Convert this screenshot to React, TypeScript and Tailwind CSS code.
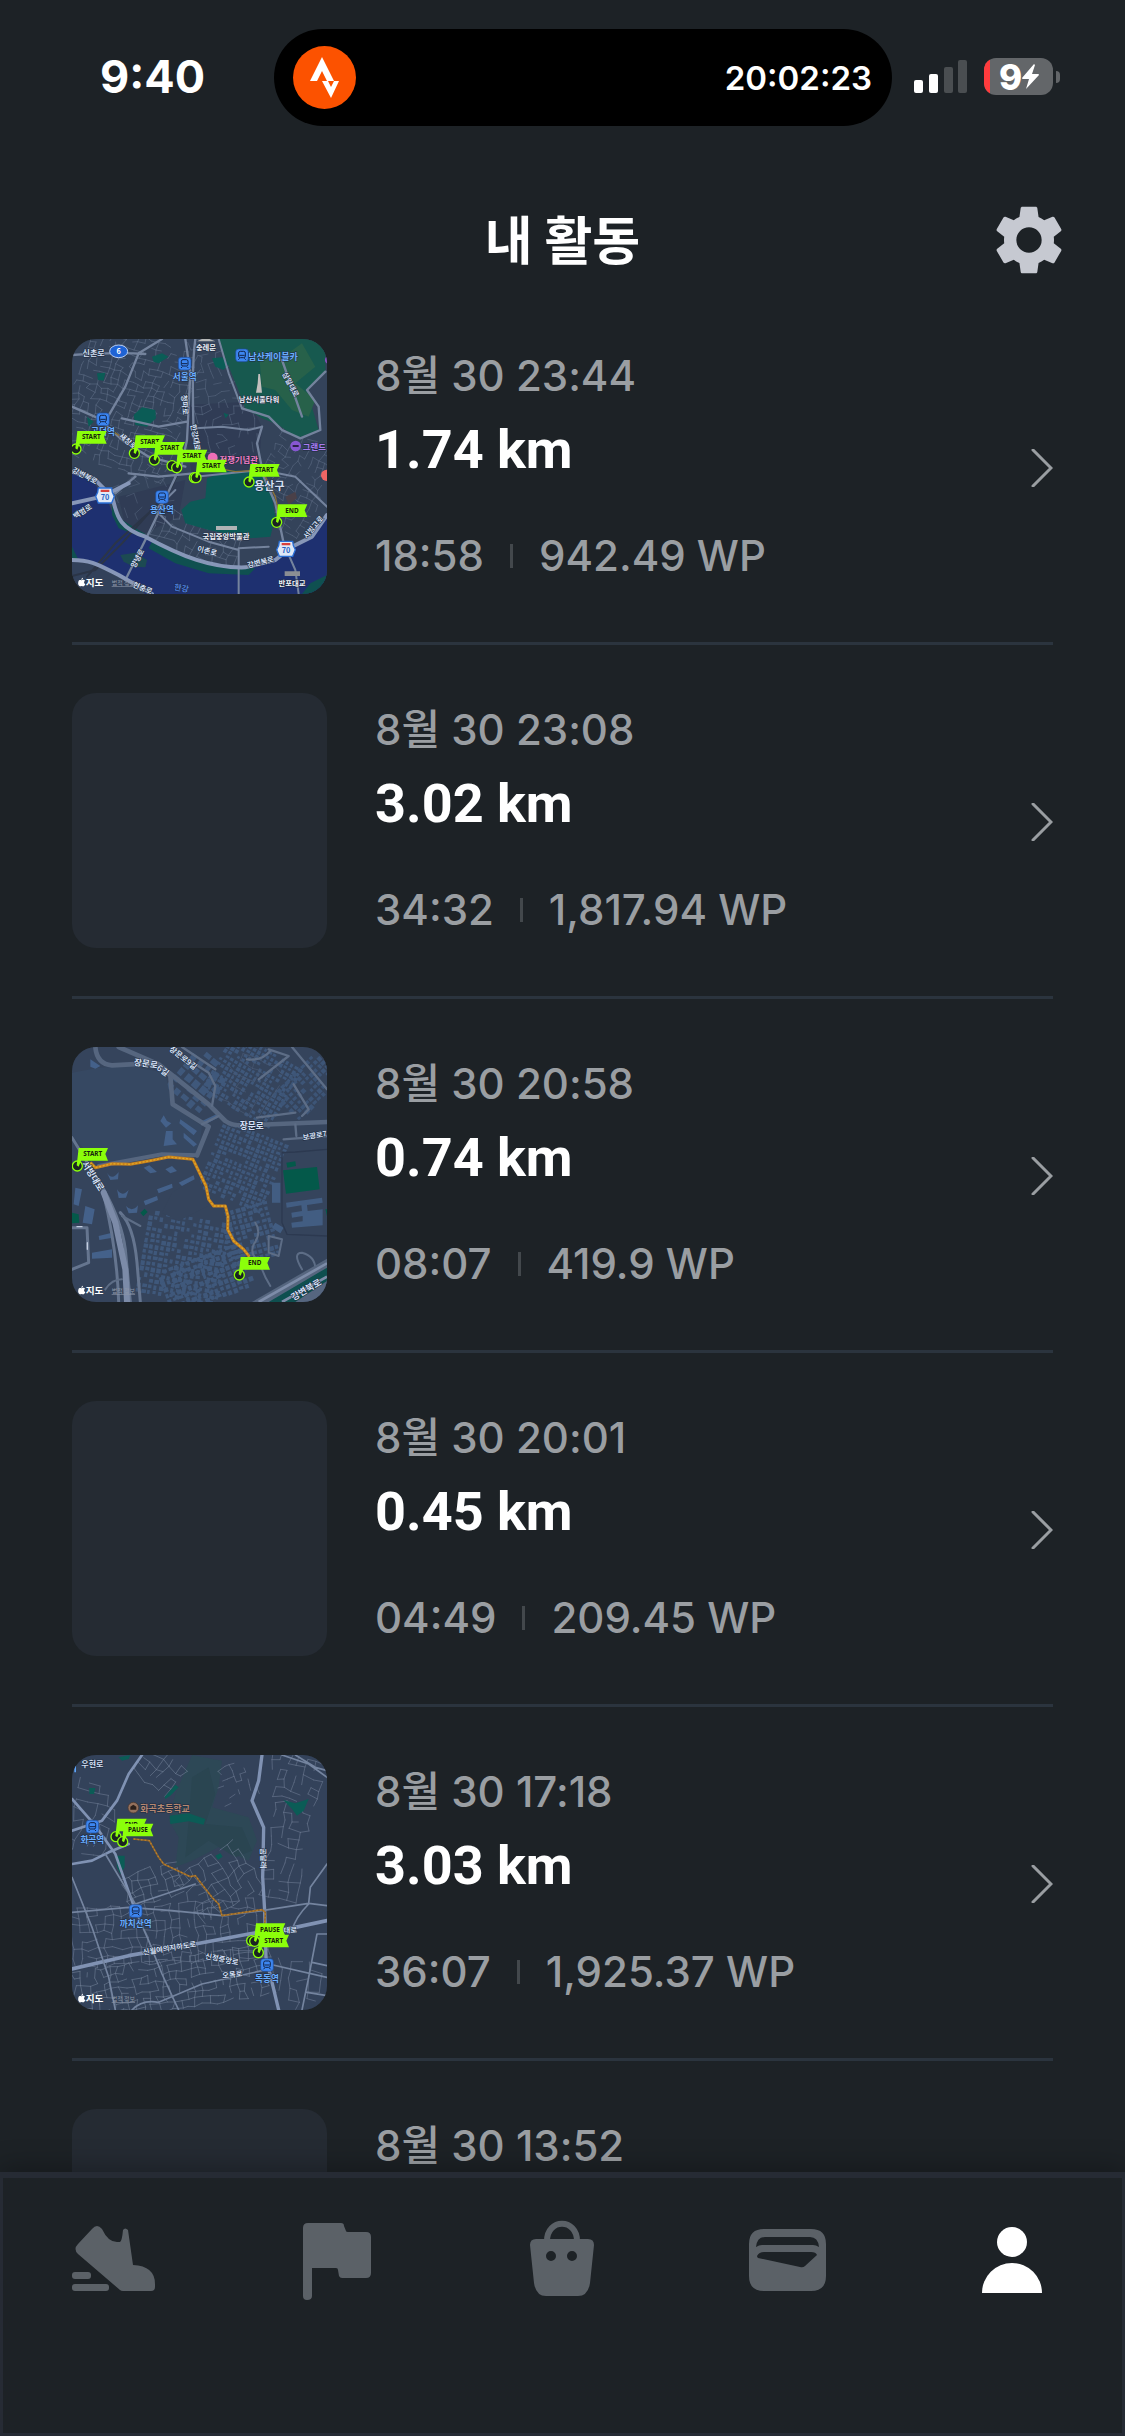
import type { ReactNode } from 'react';

interface Activity {
  id: number;
  date: string;
  distance: string;
  duration: string;
  points: string;
  map?: ReactNode;
}

/* ---------- map helpers ---------- */

type Area = [number, number, number, number];

function createRandom(seed: number) {
  let s = seed;
  return () => {
    s = (s * 16807) % 2147483647;
    return s / 2147483647;
  };
}

// Irregular street grid inside an area, rotated around its centre
function streets(seed: number, [x0, y0, x1, y1]: Area, step: number, angle: number, keep: number) {
  const rand = createRandom(seed);
  const cx = (x0 + x1) / 2;
  const cy = (y0 + y1) / 2;
  const cos = Math.cos((angle * Math.PI) / 180);
  const sin = Math.sin((angle * Math.PI) / 180);
  const cols = Math.floor((x1 - x0) / step);
  const rows = Math.floor((y1 - y0) / step);
  const nodes: string[][] = [];
  for (let r = 0; r <= rows; r++) {
    nodes.push([]);
    for (let c = 0; c <= cols; c++) {
      const dx = x0 + c * step + (rand() - 0.5) * step * 0.5 - cx;
      const dy = y0 + r * step + (rand() - 0.5) * step * 0.5 - cy;
      nodes[r].push(`${Math.round(cx + dx * cos - dy * sin)} ${Math.round(cy + dx * sin + dy * cos)}`);
    }
  }
  let d = '';
  for (let r = 0; r <= rows; r++) {
    for (let c = 0; c <= cols; c++) {
      if (c < cols && rand() < keep) d += `M${nodes[r][c]}L${nodes[r][c + 1]}`;
      if (r < rows && rand() < keep) d += `M${nodes[r][c]}L${nodes[r + 1][c]}`;
    }
  }
  return d;
}

// Small building footprints packed inside an area
function buildings(seed: number, [x0, y0, x1, y1]: Area, step: number, angle: number) {
  const rand = createRandom(seed);
  const cos = Math.cos((angle * Math.PI) / 180);
  const sin = Math.sin((angle * Math.PI) / 180);
  const cx = (x0 + x1) / 2;
  const cy = (y0 + y1) / 2;
  let d = '';
  for (let y = y0; y < y1; y += step) {
    for (let x = x0; x < x1; x += step) {
      if (rand() < 0.12) continue;
      const w = step * (0.5 + rand() * 0.35);
      const h = step * (0.5 + rand() * 0.35);
      const corners = [[x, y], [x + w, y], [x + w, y + h], [x, y + h]].map(([px, py]) => {
        const dx = px - cx;
        const dy = py - cy;
        return `${Math.round(cx + dx * cos - dy * sin)} ${Math.round(cy + dx * sin + dy * cos)}`;
      });
      d += `M${corners.join('L')}Z`;
    }
  }
  return d;
}

function Road({ d, w = 4, color = '#6f7f9b' }: { d: string; w?: number; color?: string }) {
  return <path d={d} fill="none" stroke={color} strokeWidth={w} strokeLinejoin="round" strokeLinecap="round" />;
}

interface LabelProps {
  x: number;
  y: number;
  children: string;
  fill?: string;
  size?: number;
  rotate?: number;
}

function Label({ x, y, children, fill = '#d5e0f5', size = 22, rotate = 0 }: LabelProps) {
  return (
    <text
      x={x}
      y={y}
      fill={fill}
      fontSize={size}
      textAnchor="middle"
      dominantBaseline="central"
      transform={`rotate(${rotate} ${x} ${y})`}
      stroke="#1e2a3f"
      strokeWidth={3}
      paintOrder="stroke"
      className="font-bold"
    >
      {children}
    </text>
  );
}

function Pin({ x, y, label }: { x: number; y: number; label?: string }) {
  return (
    <g transform={`translate(${x} ${y})`}>
      <circle r={15} fill="#1b2422" stroke="#8bff0a" strokeWidth={4} />
      {label && (
        <>
          <path d="M4-54H92L84-36 92-16H11L4 2-2-2Z" fill="#8bff0a" />
          <text x={46} y={-29} fontSize={19} textAnchor="middle" fill="#16240c" className="font-['Noto_Sans'] font-bold">
            {label}
          </text>
        </>
      )}
    </g>
  );
}

function Station({ x, y, name, labelY = 37 }: { x: number; y: number; name?: string; labelY?: number }) {
  return (
    <g>
      <rect x={x - 19} y={y - 19} width={38} height={38} rx={9} fill="#3d86f0" stroke="#1d4a97" strokeWidth={2} />
      <rect x={x - 10} y={y - 12} width={20} height={19} rx={5} fill="none" stroke="#10234a" strokeWidth={3} />
      <path d={`M${x - 8} ${y}h16M${x - 7} ${y + 9}l-4 4M${x + 7} ${y + 9}l4 4`} stroke="#10234a" strokeWidth={3} />
      {name && <Label x={x} y={y + labelY} fill="#6aaeff" size={26}>{name}</Label>}
    </g>
  );
}

function Route70({ x, y }: { x: number; y: number }) {
  return (
    <g transform={`translate(${x} ${y})`}>
      <path d="M-20-23H20L22-10 28 2 20 22H-20L-28 2-22-10Z" fill="#dfe8f7" stroke="#2a6fd6" strokeWidth={4} />
      <path d="M-13-18H13V-11H-13Z" fill="#d8403c" />
      <text y={12} fontSize={22} textAnchor="middle" fill="#2461c4" className="font-bold">70</text>
    </g>
  );
}

function MapCredit({ y }: { y: number }) {
  return (
    <g>
      <path
        transform={`translate(48 ${y - 14})`}
        d="M15 0C15 4 12 6 10 6 10 3 12 1 15 0ZM10 8C12 8 13 6 16 6 18 6 20 7 21 9 17 12 17 17 22 19 20 23 18 26 16 26 14 26 13 25 11 25 9 25 8 26 6 26 2 25-1 18 1 12 3 6 7 7 10 8Z"
        fill="#fff"
      />
      <text x={71} y={y + 10} fontSize={29} fill="#fff" className="font-bold">지도</text>
      <text x={149} y={y + 9} fontSize={18} fill="#8d97a8" textDecoration="underline">법적 정보</text>
    </g>
  );
}

function MapFrame({ top, title, children }: { top: number; title: string; children: ReactNode }) {
  return (
    <svg
      viewBox={`30 ${top} 765 765`}
      role="img"
      aria-label={title}
      className="size-full font-['Noto_Sans_CJK_KR',sans-serif]"
    >
      {children}
    </svg>
  );
}

function YongsanMap() {
  return (
    <MapFrame top={27} title="용산구">
      <rect x={30} y={27} width={765} height={765} fill="#34435a" />
      <path d="M370 225L560 215 600 290 590 420 390 440 375 330ZM170 500L370 450 350 560 250 610 190 590Z" fill="#303c55" />
      <Road d={streets(11, [30, 20, 380, 420], 20, 18, 0.55)} w={2} color="#5b6a82" />
      <Road d={streets(23, [390, 20, 560, 380], 24, -12, 0.45)} w={2} color="#55647c" />
      <Road d={streets(31, [590, 320, 800, 600], 20, 30, 0.55)} w={2} color="#56657d" />
      <Road d={streets(47, [270, 570, 540, 690], 22, 20, 0.65)} w={2} color="#5b6a82" />
      <Road d={streets(53, [150, 430, 340, 560], 24, -30, 0.35)} w={2} color="#4f5e76" />
      <path d="M470 27H790V130L735 180 770 300 705 325 650 285 600 265 550 235 525 170 490 85Z" fill="#17594f" />
      <path d="M590 60L650 90 720 40 760 110 700 160 760 210 740 260 690 240 640 180 600 170Z" fill="#27614a" />
      <path d="M450 85L480 82 500 100 485 120 460 110ZM215 255L240 232 280 240 282 265 255 290 220 285ZM255 340L285 335 310 350 280 372ZM105 130L130 128 125 152 108 150ZM270 80L300 70 320 80 290 100 275 95ZM75 260L95 275 80 290ZM485 248L500 254 490 265Z" fill="#0b5c56" />
      <path d="M435 445L500 420 590 425 625 470 640 560 625 620 560 625 440 600 370 580 358 540 385 515 430 505Z" fill="#0c5a57" />
      <path d="M670 500L700 485 705 505 680 525Z" fill="#4a4048" />
      <path d="M30 430L90 450 140 520 160 570 240 615 330 660 430 700 530 712 600 700 680 660 750 620 795 560V792H250L200 750 90 695 30 680Z" fill="#1e3070" />
      <path d="M30 650L50 690 30 690ZM150 500L165 560 250 612 240 622 170 595 150 555ZM270 635L400 690 500 712 580 715 560 735 440 730 340 700 260 655ZM745 760L795 735V792H720Z" fill="#0f5050" />
      <path d="M175 675L220 668 255 690 250 712 215 710 185 695Z" fill="#1c4a52" />
      <path d="M30 695L90 705 180 750 240 792H30Z" fill="#32415a" />
      <Road d="M30 738L100 720 180 640 260 550 330 470 370 380M75 740L160 640 270 540" w={6} color="#2b3547" />
      <Road d="M30 75C100 70 180 66 250 72M300 27L230 70 190 170 135 265M370 27L385 130 375 330 360 400 260 610 190 750M400 27C390 100 392 200 395 320L410 400M30 230L110 265 180 330 260 380 370 410M180 265L290 290 375 275M600 290L585 340 605 440 640 520 665 640M540 235L620 260 660 300 715 325 775 300 770 230 735 180 790 125M660 90L720 260M200 430L290 440 395 430M160 490L220 440" w={7} color="#74839d" />
      <Road d="M470 27L500 130 540 235M600 290L560 300 480 290 400 295M400 440L600 420 700 440 795 530M340 480L280 540 330 590 440 635 530 660 530 792M665 640L700 720 710 792M530 655L620 650" w={6} color="#74839d" />
      <Road d="M30 520L120 500 200 460M30 690C90 690 110 705 170 735L270 792M795 555L750 620 690 650 640 690 550 712C450 715 360 680 250 620 160 590 165 545 150 500L95 445 30 425" w={12} color="#8797b8" />
      <Road d="M440 410L520 425 600 420 640 500 650 545M130 290L185 325" w={4} color="#8a7138" />
      <Label x={95} y={68} size={24}>신촌로</Label>
      <ellipse cx={170} cy={64} rx={27} ry={19} fill="#1f63d4" stroke="#b7cdf2" strokeWidth={3} />
      <text x={170} y={72} fontSize={22} textAnchor="middle" fill="#fff" className="font-bold">6</text>
      <path d="M405 34L430 22 460 34Z" fill="#b5b7b6" />
      <Label x={432} y={50} size={22} fill="#f0f3fa">숭례문</Label>
      <Station x={368} y={101} name="서울역" />
      <Station x={540} y={76} />
      <Label x={633} y={78} size={27} fill="#6aaeff">남산케이블카</Label>
      <path d="M589 132H594L597 160 600 188H582L587 160Z" fill="#c3bfbd" />
      <Label x={591} y={204} size={22} fill="#f0f3fa">남산서울타워</Label>
      <Label x={688} y={162} rotate={62}>삼일대로</Label>
      <Label x={371} y={224} rotate={85}>청파로</Label>
      <Label x={403} y={322} rotate={80}>한강대로</Label>
      <Station x={123} y={268} name="공덕역" labelY={36} />
      <Label x={200} y={332} rotate={40}>새창로</Label>
      <circle cx={701} cy={348} r={16} fill="#8757d2" />
      <path d="M692 348H710" stroke="#2c2148" strokeWidth={6} />
      <Label x={757} y={349} size={25} fill="#a77cf0">그랜드</Label>
      <circle cx={452} cy={383} r={15} fill="#ee6fb8" />
      <Label x={530} y={386} size={25} fill="#f47fc6">전쟁기념관</Label>
      <circle cx={794} cy={436} r={17} fill="#ee6565" />
      <circle cx={800} cy={90} r={11} fill="#9054c8" />
      <Label x={70} y={435} rotate={28}>강변북로</Label>
      <Label x={60} y={542} rotate={-32}>백범로</Label>
      <Route70 x={129} y={497} />
      <Route70 x={672} y={657} />
      <Station x={300} y={501} name="용산역" />
      <path d="M462 588H525V600H462Z" fill="#b0b3b5" />
      <Label x={492} y={616} size={22} fill="#f0f3fa">국립중앙박물관</Label>
      <Label x={436} y={660} rotate={14}>이촌로</Label>
      <Label x={224} y={684} rotate={-62}>양녕로</Label>
      <Label x={595} y={694} rotate={-14}>강변북로</Label>
      <Label x={752} y={590} rotate={-50}>서빙고로</Label>
      <Label x={622} y={465} size={33}>용산구</Label>
      <Label x={359} y={773} size={24} rotate={10} fill="#4b7ee0">한강</Label>
      <path d="M668 724H714V738H668Z" fill="#8b8e93" />
      <Label x={690} y={757} size={22} fill="#f0f3fa">반포대교</Label>
      <Label x={243} y={772} rotate={22}>현충로</Label>
      <Pin x={42} y={357} label="START" />
      <Pin x={217} y={370} label="START" />
      <Pin x={277} y={390} label="START" />
      <Pin x={330} y={407} />
      <Pin x={344} y={413} label="START" />
      <Pin x={397} y={443} />
      <Pin x={402} y={443} label="START" />
      <Pin x={561} y={456} label="START" />
      <Pin x={644} y={577} label="END" />
      <MapCredit y={757} />
    </MapFrame>
  );
}

function JangmunMap() {
  return (
    <MapFrame top={33} title="장문로">
      <rect x={30} y={33} width={765} height={765} fill="#35445c" />
      <path d={buildings(5, [450, 30, 690, 240], 15, 30)} fill="#3f587b" />
      <path d={buildings(9, [350, 50, 470, 200], 28, 40)} fill="#3f587b" />
      <path d={buildings(13, [440, 280, 640, 500], 15, 22)} fill="#3f587b" />
      <path d={buildings(17, [240, 540, 480, 790], 17, 10)} fill="#3f587b" />
      <path d={buildings(19, [490, 510, 640, 680], 17, -15)} fill="#3f587b" />
      <path d={buildings(21, [680, 60, 790, 240], 17, 45)} fill="#3d5577" />
      <path d={buildings(27, [300, 660, 560, 800], 18, -20)} fill="#3f587b" />
      <path d="M30 110L110 95 200 90 310 110 330 210 420 270 410 350 280 360 110 385 30 300Z" fill="#364862" />
      <path d="M300 530L330 470 410 420 440 510 350 555Z" fill="#35445c" />
      <path d="M295 255L305 238 315 255 328 262 312 275ZM312 285H332V310L345 325 305 330ZM355 250L405 285 395 298 352 262ZM365 290L405 325 395 332 365 305ZM420 255L470 232 468 245 430 265ZM135 410Q150 435 170 408L168 430 145 432ZM165 460Q180 485 200 462L192 485 170 486ZM192 510Q210 530 228 508L225 530 200 532ZM245 395L262 388 285 408 265 412ZM310 400L330 390 345 405 325 412ZM350 440L395 418 398 430 360 450ZM285 460L330 443 332 455 290 472ZM245 495L285 480 288 492 250 508ZM85 70L115 90 100 98 85 92ZM40 455L60 460 50 510 35 505ZM70 510L98 520 90 565 62 560ZM90 650L150 640 150 665 90 668ZM110 600L150 590 152 605 112 612Z" fill="#44618a" />
      <path d="M672 500L780 485 782 500 735 507 737 525 782 520V568L690 575 688 560 722 556V540L690 545 688 530 720 525 718 508 674 515ZM630 440H655V500H630ZM640 560L665 575 655 592 630 575Z" fill="#425d82" />
      <path d="M660 350L700 348 795 340M660 350V560L675 595 795 600" fill="none" stroke="#2c3950" strokeWidth={4} />
      <path d="M663 403L765 393 773 460 672 473ZM673 380L700 376 702 390 676 395ZM235 530L248 518 257 528 244 541ZM30 530L50 535 52 560 30 562ZM790 520H795V540Z" fill="#04594a" />
      <Road d={streets(61, [470, 70, 660, 240], 32, 30, 0.5)} w={2} color="#4a5b76" />
      <Road d="M100 33Q105 85 150 88L260 82Q310 90 325 120L332 205 440 272 405 358" w={14} color="#56667f" />
      <Road d="M170 33L290 85 440 205 490 255Q510 270 550 268L795 258" w={14} color="#56667f" />
      <Road d="M330 40L440 110 460 150 450 210M360 33L460 100M690 33L795 160M590 130L680 60 620 40M555 70Q600 75 625 45M695 145L740 220 720 240M585 245L700 230M420 265L470 240M665 310L795 300M700 265L703 300" w={7} color="#5d6d86" />
      <Road d="M110 390L300 355 405 358" w={12} color="#56667f" />
      <Road d="M30 305L125 460Q180 560 190 640L205 798M125 475Q165 640 170 798M175 530Q215 570 225 680L235 798M30 575L75 575 80 680 30 700" w={9} color="#65758f" />
      <Road d="M125 470L160 560 190 700 195 798" w={18} color="#7c8ba8" />
      <Road d="M580 560Q600 590 575 625 560 660 600 680M620 600L660 610 650 660 620 650ZM595 680Q600 710 625 750M720 700Q690 650 720 650 760 660 760 700M130 760Q150 730 180 730M180 540L235 570" w={6} color="#5d6d86" />
      <path d="M570 798L795 668V798Z" fill="#56667f" />
      <path d="M620 798L795 695V735L700 798Z" fill="#0e4f4f" />
      <path d="M590 798L795 682M660 798L795 722" stroke="#7d8ca8" strokeWidth={8} />
      <path
        d="M85 380L100 395 150 383 205 385 260 375 320 363 393 370 410 405 432 450 440 490 455 510 490 510 498 540 497 580 515 615 545 640 562 662"
        fill="none"
        stroke="#c9801c"
        strokeWidth={9}
        strokeLinejoin="round"
      />
      <path
        d="M85 380L100 395 150 383 205 385 260 375 320 363 393 370 410 405 432 450 440 490 455 510 490 510 498 540 497 580 515 615 545 640 562 662"
        fill="none"
        stroke="#deaa28"
        strokeWidth={4}
        strokeDasharray="6 5"
      />
      <Road d="M45 572H60M76 620V640" w={4} color="#c2cde0" />
      <Label x={252} y={80} rotate={8} size={26}>장문로</Label>
      <Label x={304} y={101} rotate={35} size={25}>6길</Label>
      <Label x={365} y={64} rotate={38} size={23}>장문로9길</Label>
      <Label x={569} y={266} size={26}>장문로</Label>
      <Label x={758} y={296} size={22} rotate={-10}>보광로7</Label>
      <Label x={94} y={420} size={27} rotate={58}>서빙대로</Label>
      <Label x={732} y={760} size={27} rotate={-30}>강변북로</Label>
      <Pin x={46} y={390} label="START" />
      <Pin x={532} y={717} label="END" />
      <MapCredit y={763} />
    </MapFrame>
  );
}

function HwagokMap() {
  return (
    <MapFrame top={33} title="화곡역">
      <rect x={30} y={33} width={765} height={765} fill="#33425a" />
      <path d="M390 33L480 50 470 130 450 190 560 220 585 290 560 350 470 310 390 350 340 370 350 280 320 230 340 150Z" fill="#2d4856" />
      <path d="M390 100L440 70 460 150 430 240 540 250 570 320 520 340 440 290 370 340 380 230Z" fill="#2a4551" />
      <Road d={streets(7, [220, 30, 370, 150], 26, 40, 0.65)} w={2} color="#6a7890" />
      <Road d={streets(8, [30, 120, 150, 340], 30, 15, 0.5)} w={2} color="#66748c" />
      <Road d={streets(14, [370, 330, 590, 500], 26, -33, 0.75)} w={2} color="#6a7890" />
      <Road d={streets(15, [190, 370, 380, 480], 24, -18, 0.65)} w={2} color="#6a7890" />
      <Road d={streets(16, [30, 480, 600, 660], 25, -3, 0.68)} w={2} color="#66748c" />
      <Road d={streets(18, [40, 640, 640, 800], 22, -9, 0.7)} w={2} color="#6a7890" />
      <Road d={streets(22, [620, 180, 740, 480], 26, 10, 0.55)} w={2} color="#66748c" />
      <Road d={streets(24, [620, 40, 790, 170], 26, 15, 0.5)} w={2} color="#66748c" />
      <Road d={streets(26, [650, 650, 790, 800], 30, 5, 0.5)} w={2} color="#66748c" />
      <Road d={streets(28, [470, 60, 590, 180], 18, -20, 0.4)} w={2} color="#66748c" />
      <path d="M308 158L340 122 350 130 325 155 310 165ZM323 215L380 208 430 225 425 242 380 232 325 240ZM664 168L700 178 740 165 725 200 705 215 690 195ZM460 335L475 328 482 338 468 347ZM163 335H188V370L175 390 165 370ZM82 132H100L96 150H82ZM170 40L205 33 200 45 180 50Z" fill="#0b5c56" />
      <Road d="M240 33L200 90 165 170 120 230 30 260M30 165L100 245 160 330 220 500M30 360L90 350 140 325 200 300" w={8} color="#8092b3" />
      <Road d="M600 33L590 110 570 170 605 250 602 400 608 500 612 640 650 798" w={10} color="#8092b3" />
      <Road d="M30 675L200 635 400 600 560 570 700 550 795 530" w={11} color="#8092b3" />
      <Road d="M220 500L260 590 300 690 350 798M30 505L200 490 330 500 480 515 600 500 740 478 795 485M740 478L745 430 795 360M130 330L220 480 400 420M690 560Q700 520 740 480" w={5} color="#74849f" />
      <Road d="M30 400L90 550 140 700 160 798M620 660L795 700M765 570L740 700 720 798M765 570H795M750 655L795 665M735 745L795 755M210 798Q240 765 290 775L420 720 600 680M700 33L760 70 795 80M660 33L740 60 795 100" w={5} color="#74849f" />
      <Road d="M215 285L262 290 290 340 305 360 385 398 400 395 450 460 470 480 480 515 600 497 610 505 608 545" w={5} color="#8f6429" />
      <path
        d="M215 285L262 290 290 340 305 360 385 398 400 395 450 460 470 480 480 515 600 497 610 505 608 545"
        fill="none"
        stroke="#b9802f"
        strokeWidth={4}
        strokeDasharray="5 6"
      />
      <Label x={91} y={58} size={24}>우현로</Label>
      <path d="M37 65H42V85H37Z" fill="#5da4f8" />
      <circle cx={214} cy={191} r={16} fill="#94705c" stroke="#49352b" strokeWidth={2} />
      <path d="M205 197V188L214 182 223 188V197Z" fill="#2b1f1a" />
      <Label x={309} y={192} size={27} fill="#b58872">화곡초등학교</Label>
      <Station x={91} y={248} name="화곡역" labelY={38} />
      <Station x={221} y={501} name="까치산역" labelY={37} />
      <Station x={615} y={663} name="목동역" labelY={38} />
      <Label x={606} y={343} size={22} rotate={88}>곰달래</Label>
      <Label x={322} y={610} size={22} rotate={-9}>신월여의지하도로</Label>
      <Label x={480} y={643} size={22} rotate={11}>신정중앙로</Label>
      <Label x={511} y={689} size={22} rotate={-6}>오목로</Label>
      <Label x={685} y={556} size={22} rotate={-4}>대로</Label>
      <Pin x={162} y={278} label="END" />
      <Pin x={182} y={293} label="PAUSE" />
      <Pin x={569} y={590} />
      <Pin x={578} y={592} label="PAUSE" />
      <Pin x={589} y={626} label="START" />
      <MapCredit y={763} />
    </MapFrame>
  );
}

/* ---------- data ---------- */

const activities: Activity[] = [
  { id: 1, date: '8월 30 23:44', distance: '1.74 km', duration: '18:58', points: '942.49 WP', map: <YongsanMap /> },
  { id: 2, date: '8월 30 23:08', distance: '3.02 km', duration: '34:32', points: '1,817.94 WP' },
  { id: 3, date: '8월 30 20:58', distance: '0.74 km', duration: '08:07', points: '419.9 WP', map: <JangmunMap /> },
  { id: 4, date: '8월 30 20:01', distance: '0.45 km', duration: '04:49', points: '209.45 WP' },
  { id: 5, date: '8월 30 17:18', distance: '3.03 km', duration: '36:07', points: '1,925.37 WP', map: <HwagokMap /> },
  { id: 6, date: '8월 30 13:52', distance: '', duration: '', points: '' },
];

const tabs = [
  {
    label: '운동',
    icon: (
      <>
        <path d="M24 12Q29 6 34 12 40 25 49 25H52Q54 24 55 13 57 10 60 13L65 48Q87 49 87 67V70Q87 74 83 74H55Q53 74 52 73L10 37Q5 32 10 27Z" />
        <rect x={4} y={55} width={19} height={7} rx={3} />
        <rect x={4} y={67} width={37} height={7} rx={3} />
      </>
    ),
  },
  {
    label: '챌린지',
    icon: <path d="M10 11Q10 6 15 6H48Q51 6 51 9L53 14Q53 15 55 15H73Q78 15 78 20V56Q78 61 73 61H49Q47 61 46 59L45 53Q45 51 43 51H19V79Q19 83 14 83 10 83 10 79Z" />,
  },
  {
    label: '상점',
    icon: (
      <>
        <path d="M29 24C29 1 59 1 59 24" fill="none" stroke="currentColor" strokeWidth={6} />
        <path
          fillRule="evenodd"
          d="M18 22H70Q76 22 76 28L72 66Q70 79 60 79H28Q18 79 16 66L12 28Q12 22 18 22ZM33 34a5 5 0 1 0 0 10a5 5 0 1 0 0-10ZM54 34a5 5 0 1 0 0 10a5 5 0 1 0 0-10Z"
        />
      </>
    ),
  },
  {
    label: '지갑',
    icon: (
      <path
        fillRule="evenodd"
        d="M21 12H68Q83 12 83 27V59Q83 74 68 74H21Q6 74 6 59V27Q6 12 21 12ZM13 30Q14 20 22 20H67Q75 20 76 30 73 28 70 28H19Q16 28 13 30ZM14 39Q16 35 21 35H68Q73 35 74 38L62 49Q60 51 57 50L15 41Q14 40 14 39Z"
      />
    ),
  },
  {
    label: '내 활동',
    active: true,
    icon: (
      <>
        <circle cx={44} cy={25} r={15} />
        <path d="M14 76A30 30 0 0 1 74 76Z" />
      </>
    ),
  },
];

/* ---------- screen ---------- */

function StatusBar() {
  return (
    <div className="flex items-center pt-[29px]">
      <div className="w-[274px] pb-0.5 pl-[100px] text-[45px] leading-[48px] font-bold">9:40</div>
      <div className="flex h-[97px] flex-1 items-center justify-between rounded-full bg-black pr-5 pl-[19px]">
        <svg viewBox="0 0 63 63" className="size-[63px]" aria-label="Strava">
          <circle cx={31.5} cy={31.5} r={31.5} fill="#fc5200" />
          <path d="M29 11L41 35H34L29 25 24 35H17Z" fill="#fff" />
          <path fillRule="evenodd" d="M29 35H46L38 52ZM35 35L38 41 41 35Z" fill="#fff" />
        </svg>
        <span className="text-[33px] leading-[48px] font-semibold">20:02:23</span>
      </div>
      <div className="flex w-[233px] items-center gap-4 pb-0.5 pl-[22px]">
        <svg viewBox="0 0 54 34" className="h-[34px] w-[54px]" aria-label="신호">
          <rect x={0} y={20} width={9} height={13} rx={2} fill="#fff" />
          <rect x={15} y={14} width={9} height={19} rx={2} fill="#fff" />
          <rect x={30} y={7} width={9} height={26} rx={2} fill="#4a4e51" />
          <rect x={44} y={0} width={9} height={33} rx={2} fill="#4a4e51" />
        </svg>
        <div className="flex items-center gap-[3px]">
          <div className="flex h-[37px] w-[69px] items-center overflow-hidden rounded-xl bg-[#636669]">
            <span className="h-full w-[6px] bg-[#ff3b3d]" />
            <span className="ml-[9px] text-[35px] leading-[48px] font-extrabold">9</span>
            <svg viewBox="0 0 17 25" className="h-[25px] w-[17px]" fill="#fff">
              <path d="M12 0L0 14Q0 15 1 15H7L4 25 17 11Q17 10 16 10H10L13 1Z" />
            </svg>
          </div>
          <span className="h-3 w-1 rounded-r-full bg-[#636669]" />
        </div>
      </div>
    </div>
  );
}

function ActivityRow({ activity }: { activity: Activity }) {
  return (
    <li className="border-b-[3px] border-[#2b343e] pb-12">
      <a href={`#activity-${activity.id}`} className="flex items-center gap-12">
        <div className="size-[255px] shrink-0 overflow-hidden rounded-3xl bg-[#252b33]">{activity.map}</div>
        <div className="flex-1 self-start pt-[13px] text-[42px] leading-[48px] font-medium text-[#9a9ea2]">
          <p>{activity.date}</p>
          {activity.distance && (
            <>
              <p className="mt-5 font-['Roboto',sans-serif] text-[54px] leading-[60px] font-bold text-white">
                {activity.distance}
              </p>
              <div className="mt-[52px] flex items-center gap-[26px]">
                <span>{activity.duration}</span>
                <span className="h-6 w-[3px] bg-[#43484c]" />
                <span>{activity.points}</span>
              </div>
            </>
          )}
        </div>
        <svg viewBox="0 0 22 38" className="mt-[3px] h-[38px] w-[22px] shrink-0" fill="none" stroke="#9a9ea2" strokeWidth={3}>
          <path d="M2 1L20 19 2 37" strokeLinecap="round" />
        </svg>
      </a>
    </li>
  );
}

export default function App() {
  return (
    <div className="flex h-screen flex-col overflow-hidden bg-[#1d2226] font-['Inter','Noto_Sans_CJK_KR',sans-serif] text-white">
      <StatusBar />

      <header className="mt-[54px] grid grid-cols-[1fr_auto_1fr] items-center px-14">
        <h1 className="col-start-2 pb-1 font-['Noto_Sans_CJK_KR',sans-serif] text-[52px] leading-[116px] font-bold">
          내 활동
        </h1>
        <button type="button" aria-label="설정" className="justify-self-end text-[#c6c9d1]">
          <svg viewBox="0 0 24 24" className="size-20" fill="currentColor">
            <path d="M19.43 12.98c.04-.32.07-.64.07-.98s-.03-.66-.07-.98l2.11-1.65c.19-.15.24-.42.12-.64l-2-3.46c-.12-.22-.39-.3-.61-.22l-2.49 1c-.52-.4-1.08-.73-1.69-.98l-.38-2.65C14.46 2.18 14.25 2 14 2h-4c-.25 0-.46.18-.49.42l-.38 2.65c-.61.25-1.17.59-1.69.98l-2.49-1c-.23-.09-.49 0-.61.22l-2 3.46c-.13.22-.07.49.12.64l2.11 1.65c-.04.32-.07.65-.07.98s.03.66.07.98l-2.11 1.65c-.19.15-.24.42-.12.64l2 3.46c.12.22.39.3.61.22l2.49-1c.52.4 1.08.73 1.69.98l.38 2.65c.03.24.24.42.49.42h4c.25 0 .46-.18.49-.42l.38-2.65c.61-.25 1.17-.59 1.69-.98l2.49 1c.23.09.49 0 .61-.22l2-3.46c.12-.22.07-.49-.12-.64l-2.11-1.65zM12 15.8a3.8 3.8 0 1 1 0-7.6 3.8 3.8 0 0 1 0 7.6z" />
          </svg>
        </button>
      </header>

      <main className="min-h-0 flex-1 overflow-hidden px-[72px] pt-[39px]">
        <ul className="flex flex-col gap-12">
          {activities.map((activity) => (
            <ActivityRow key={activity.id} activity={activity} />
          ))}
        </ul>
      </main>

      <nav className="relative grid h-[264px] shrink-0 grid-cols-5 items-start border-t-[3px] border-[#262b34] bg-[#1d2226] pt-[42px] shadow-[inset_0_0_0_3px_#262b34,0_-6px_24px_rgba(0,0,0,0.25)]">
        {tabs.map((tab) => (
          <button
            key={tab.label}
            type="button"
            aria-label={tab.label}
            className={`flex justify-center ${tab.active ? 'text-white' : 'text-[#5b6167]'}`}
          >
            <svg viewBox="0 0 90 90" className="size-[90px]" fill="currentColor">
              {tab.icon}
            </svg>
          </button>
        ))}
      </nav>
    </div>
  );
}
